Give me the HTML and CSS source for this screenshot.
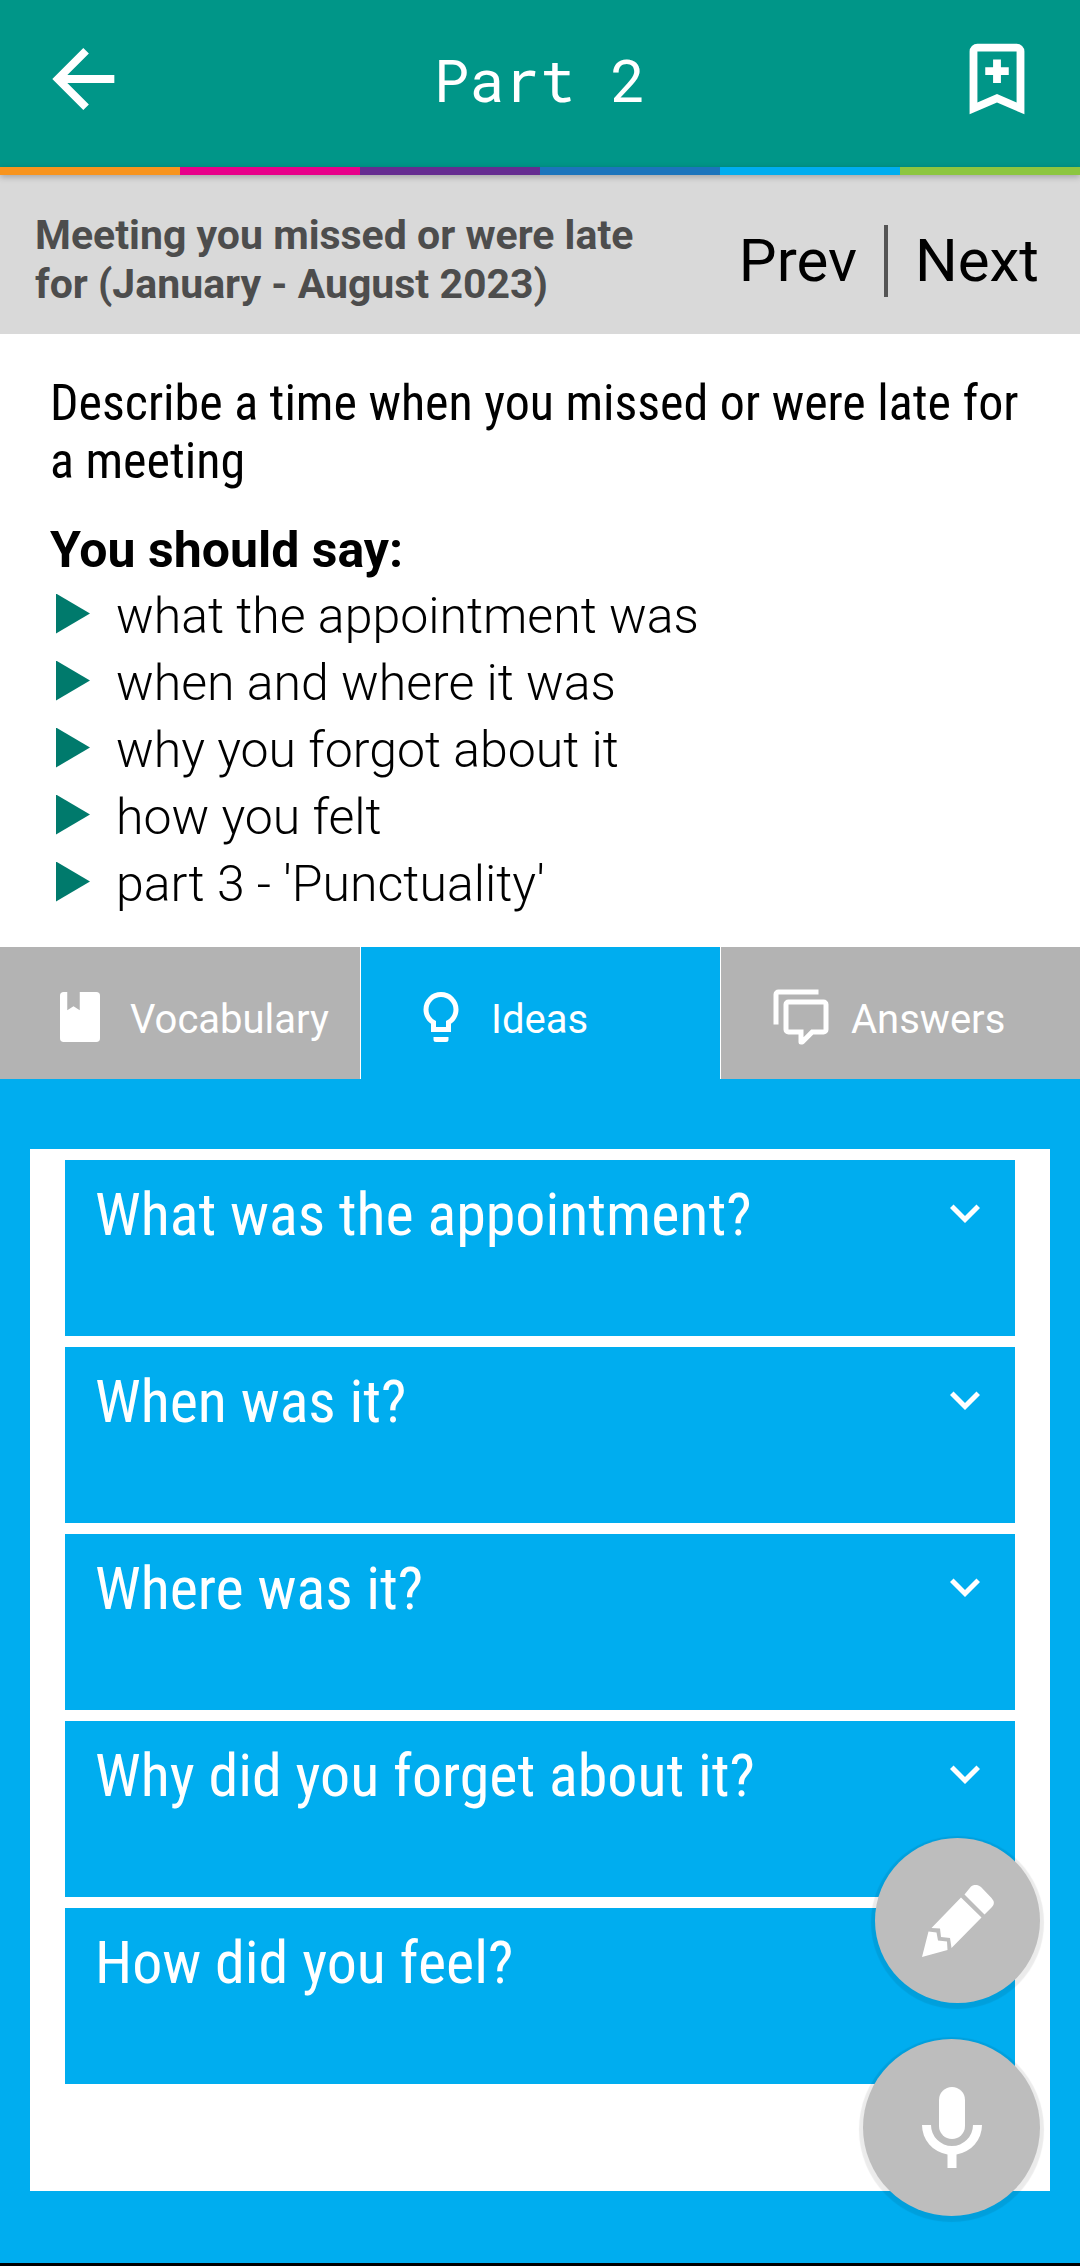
FILE: index.html
```html
<!DOCTYPE html>
<html lang="en">
<head>
<meta charset="utf-8">
<meta name="viewport" content="width=device-width, initial-scale=1">
<title>Part 2</title>
<link rel="stylesheet" href="styles.css">
</head>
<body>
<header class="app-bar">
  <button class="icon-button" type="button" aria-label="Back">
    <svg viewBox="0 0 24 24"><path d="M20 11v2H8l5.500 5.500-1.420 1.420L4.160 12l7.920-7.920L13.500 5.500 8 11z"/></svg>
  </button>
  <h1 class="app-title">Part 2</h1>
  <button class="icon-button" type="button" aria-label="Add bookmark">
    <svg viewBox="0 0 24 24"><path d="M17 18V5H7v13l5-2.180zM17 3a2 2 0 0 1 2 2v16l-7-3-7 3V5a2 2 0 0 1 2-2zM11 7h2v2h2v2h-2v2h-2v-2H9V9h2z"/></svg>
  </button>
</header>
<div class="stripes"><i class="orange"></i><i class="pink"></i><i class="purple"></i><i class="blue"></i><i class="sky"></i><i class="green"></i></div>

<section class="topic-bar">
  <h2 class="topic-name">Meeting you missed or were late for (January - August 2023)</h2>
  <nav class="pager">
    <a href="#prev">Prev</a>
    <span class="divider"></span>
    <a href="#next">Next</a>
  </nav>
</section>

<main class="main">
  <section class="prompt">
    <p class="task">Describe a time when you missed or were late for a meeting</p>
    <h3 class="say">You should say:</h3>
    <ul class="points">
      <li>what the appointment was</li>
      <li>when and where it was</li>
      <li>why you forgot about it</li>
      <li>how you felt</li>
      <li>part 3 - 'Punctuality'</li>
    </ul>
  </section>

  <div class="tabs" role="tablist">
    <button class="tab" type="button" role="tab" aria-selected="false">
      <svg viewBox="0 0 24 24"><path d="M5.800 2h1.100v7.300L9.400 7.700l2.500 1.600V2H18.500A1.500 1.500 0 0 1 20 3.500v17a1.500 1.500 0 0 1-1.500 1.500h-13A1.500 1.500 0 0 1 4 20.500v-17A1.500 1.500 0 0 1 5.500 2z"/></svg>
      Vocabulary
    </button>
    <button class="tab active" type="button" role="tab" aria-selected="true">
      <svg viewBox="0 0 24 24"><path d="M12 2a7 7 0 0 1 7 7c0 2.380-1.190 4.470-3 5.740V18H8v-3.260C6.190 13.470 5 11.380 5 9a7 7 0 0 1 7-7M9 20h6v1a1 1 0 0 1-1 1h-4a1 1 0 0 1-1-1zm3-16a5 5 0 0 0-5 5c0 2.050 1.230 3.810 3 4.580V16h4v-2.420c1.770-.770 3-2.530 3-4.580a5 5 0 0 0-5-5"/></svg>
      Ideas
    </button>
    <button class="tab" type="button" role="tab" aria-selected="false">
      <svg viewBox="0 0 24 24"><path d="M12 23a1 1 0 0 1-1-1v-3H7a2 2 0 0 1-2-2V7a2 2 0 0 1 2-2h14a2 2 0 0 1 2 2v10a2 2 0 0 1-2 2h-4.100l-3.700 3.710c-.200.190-.450.290-.700.290zm1-6v3.080L16.080 17H21V7H7v10zM3 15H1V3a2 2 0 0 1 2-2h16v2H3z"/></svg>
      Answers
    </button>
  </div>

  <section class="panel">
    <div class="card">
      <button class="question" type="button">What was the appointment?<svg viewBox="0 0 24 24"><path d="M7.410 8.580 12 13.170l4.590-4.590L18 10l-6 6-6-6z"/></svg></button>
      <button class="question" type="button">When was it?<svg viewBox="0 0 24 24"><path d="M7.410 8.580 12 13.170l4.590-4.590L18 10l-6 6-6-6z"/></svg></button>
      <button class="question" type="button">Where was it?<svg viewBox="0 0 24 24"><path d="M7.410 8.580 12 13.170l4.590-4.590L18 10l-6 6-6-6z"/></svg></button>
      <button class="question" type="button">Why did you forget about it?<svg viewBox="0 0 24 24"><path d="M7.410 8.580 12 13.170l4.590-4.590L18 10l-6 6-6-6z"/></svg></button>
      <button class="question" type="button">How did you feel?</button>
    </div>
  </section>
</main>

<div class="actions">
  <button class="fab" type="button" aria-label="Write notes">
    <svg viewBox="0 0 72 72"><path d="M49 1.500Q54-2 59 2L69.500 13Q74 18 70 22L62.500 29.500 42.500 9.500zM39 12.500 59.500 32.500 29.500 63 28 53 19 52 18 43.500 9.500 43zM6.500 46.500 14.500 47.500 16 55.500 25 56.500 25.500 65 0 72z"/></svg>
  </button>
  <button class="fab large" type="button" aria-label="Record">
    <svg viewBox="0 0 60 82"><rect x="17" y="0" width="26" height="52" rx="13"/><path d="M0 38h9a21 21 0 0 0 42 0h9a30 30 0 0 1-25.500 29.500V81h-9V67.500A30 30 0 0 1 0 38z"/></svg>
  </button>
</div>
</body>
</html>
```
FILE: styles.css
```css
:root {
  --teal: #009688;
  --sky: #00adef;
  --grey: #b3b3b3;
}

* { box-sizing: border-box; }

body {
  position: relative;
  display: flex;
  flex-direction: column;
  min-height: 100vh;
  margin: 0;
  border-bottom: 3px solid #000;
  background: #fff;
  color: #000;
  font-family: Roboto, "Liberation Sans", sans-serif;
}

h1, h2, h3, p, ul { margin: 0; padding: 0; }

button {
  margin: 0;
  padding: 0;
  border: 0;
  background: none;
  color: inherit;
  font: inherit;
  text-align: left;
}

svg { display: block; flex: none; fill: currentColor; }

.app-bar {
  display: flex;
  align-items: center;
  justify-content: space-between;
  height: 167px;
  padding: 0 36px 10px;
  background: var(--teal);
  color: #fff;
}

.icon-button svg { width: 94px; height: 94px; }

.app-title {
  font: 400 59px/78px "Roboto Mono", "Liberation Mono", monospace;
}

.stripes {
  position: relative;
  display: grid;
  grid-template-columns: repeat(6, 1fr);
  height: 8px;
  box-shadow: 0 2px 6px rgba(0, 0, 0, .25);
}
.orange { background: #f7941e; }
.pink { background: #e8008a; }
.purple { background: #662d91; }
.blue { background: #1c75bc; }
.sky { background: #00adef; }
.green { background: #8cc63f; }

.topic-bar {
  display: flex;
  align-items: center;
  justify-content: space-between;
  min-height: 159px;
  padding: 12px 41px 0 35px;
  background: #d9d9d9;
}

.topic-name {
  max-width: 640px;
  padding-bottom: 2px;
  color: #4d4d4d;
  font-size: 41px;
  font-weight: 700;
  line-height: 49px;
}

.pager {
  display: flex;
  align-items: center;
  gap: 27px;
  font-size: 60px;
  line-height: 72px;
}
.pager a { color: #000; text-decoration: none; }
.divider { width: 4px; height: 72px; background: #555; }

.main { display: flex; flex: 1; flex-direction: column; }

.prompt { padding: 40px 50px 29px; }

.task {
  font: 400 50px/58px "Roboto Condensed", Roboto, sans-serif;
}

.say {
  margin: 30px 0 3px;
  font-size: 50px;
  font-weight: 700;
  line-height: 60px;
}

.points {
  list-style: none;
  font-size: 50px;
  font-weight: 300;
  line-height: 67px;
}
.points li { display: flex; align-items: center; gap: 26px; padding-left: 6px; }
.points li::before {
  width: 34px;
  height: 40px;
  margin-bottom: 6px;
  background: #007a6c;
  clip-path: polygon(0 0, 100% 50%, 0 100%);
  content: "";
}

.tabs {
  display: grid;
  grid-template-columns: repeat(3, 1fr);
  background: var(--sky);
  color: #fff;
}
.tab {
  display: flex;
  align-items: center;
  gap: 20px;
  height: 132px;
  padding: 12px 0 0 50px;
  background: var(--grey);
  font-size: 40px;
}
.tab + .tab { border-left: 1px solid #fff; }
.tab svg { width: 60px; height: 60px; margin-bottom: 4px; }
.tab.active { background: var(--sky); }

.panel {
  flex: 1;
  padding: 70px 30px 72px;
  background: var(--sky);
}

.card {
  display: flex;
  flex-direction: column;
  gap: 11px;
  height: 100%;
  padding: 11px 35px 107px;
  background: #fff;
}

.question {
  display: flex;
  align-items: flex-start;
  justify-content: space-between;
  height: 176px;
  padding: 20px 20px 0 30px;
  background: var(--sky);
  color: #fff;
  font: 400 60px/70px "Roboto Condensed", Roboto, sans-serif;
}
.question svg { width: 60px; height: 60px; margin-top: 3px; }

.actions {
  position: absolute;
  right: 40px;
  bottom: 47px;
  display: flex;
  flex-direction: column;
  align-items: flex-end;
  gap: 36px;
}
.fab {
  display: grid;
  place-items: center;
  width: 165px;
  height: 165px;
  border-radius: 50%;
  background: #bdbdbd;
  color: #fff;
  box-shadow: 0 2px 1px 4px rgba(0, 0, 0, .08);
}
.fab svg { width: 72px; height: 72px; }
.fab.large { width: 177px; height: 177px; }
.fab.large svg { width: 60px; height: 82px; }
```
